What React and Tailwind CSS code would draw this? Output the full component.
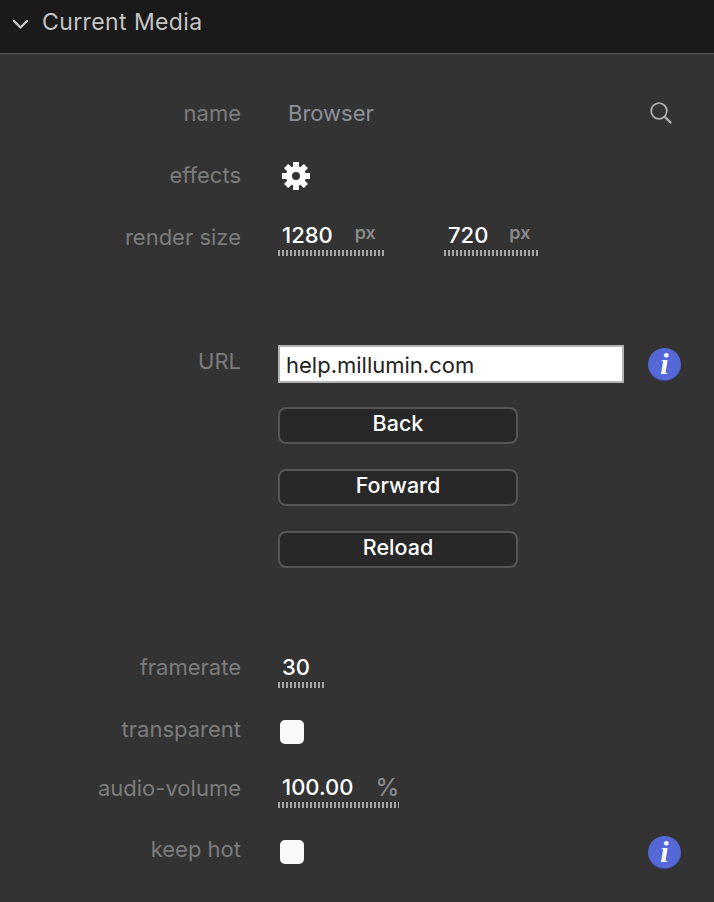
import React from 'react';

const Label = ({ children, className = '' }) => (
  <div className={`w-[241px] shrink-0 text-right text-[22px] leading-[28px] text-[#7c7c7c] ${className}`}>{children}</div>
);

const Ticks = ({ width }) => (
  <div
    className="h-[6px] mt-[1px] bg-[repeating-linear-gradient(90deg,#a6a6a6_0,#a6a6a6_2px,transparent_2px,transparent_4px)]"
    style={{ width }}
  />
);

const NumberField = ({ value, unit, width, unitGap, unitClass = '' }) => (
  <div className="flex flex-col justify-end h-full" style={{ width }}>
    <div className="flex items-start h-[27px] pl-[4px] text-[22px] leading-[27px] font-medium text-white">
      <span>{value}</span>
      {unit && <span className={`text-[#8a8a8a] ${unitClass}`} style={{ marginLeft: unitGap }}>{unit}</span>}
    </div>
    <Ticks width={width} />
  </div>
);

const InfoIcon = () => (
  <div className="w-[33px] h-[33px] rounded-full bg-[#5468d6] border-b border-[#3f4d9c] flex items-center justify-center text-white italic font-bold text-[30px] leading-none font-['Liberation_Serif',serif]">
    i
  </div>
);

const GearIcon = () => (
  <svg width="28" height="28" viewBox="0 0 28 28" fill="#ffffff">
    {[0, 45, 90, 135, 180, 225, 270, 315].map((a) => (
      <rect key={a} x="11" y="0" width="6" height="7" rx="0.5" transform={`rotate(${a} 14 14)`} />
    ))}
    <path fillRule="evenodd" d="M14 4a10 10 0 1 0 0 20a10 10 0 1 0 0-20zM14 10a4 4 0 1 1 0 8a4 4 0 1 1 0-8z" />
  </svg>
);

const Checkbox = () => <div className="w-[24px] h-[24px] rounded-[5px] bg-[#fafafa]" />;

const ActionButton = ({ label, className = '' }) => (
  <button className={`block ml-[278px] w-[240px] h-[37px] rounded-[8px] border-2 border-[#555555] bg-[#282828] text-white text-[21.5px] font-medium leading-[28px] pb-[5px] ${className}`}>
    {label}
  </button>
);

export default function App() {
  return (
    <div className="w-[714px] h-[902px] overflow-hidden bg-[#333333] font-['Inter',sans-serif]">
      {/* header */}
      <div className="flex items-center h-[54px] pl-[12px] pb-[10px] bg-[#1a1a1a] border-b border-[#555555]">
        <svg width="17" height="11" viewBox="0 0 17 11" className="mt-[5px]" fill="none" stroke="#c8c8c8" strokeWidth="2.4" strokeLinecap="round" strokeLinejoin="round">
          <path d="M2 2l6.5 6.5L15 2" />
        </svg>
        <span className="ml-[13px] text-[23px] leading-[28px] tracking-[0.4px] text-[#c4c4c4]">Current Media</span>
      </div>

      {/* media params */}
      <div className="flex items-center h-[38px] mt-[40px]">
        <Label>name</Label>
        <span className="ml-[47px] text-[22px] leading-[28px] text-[#8b9099]">Browser</span>
        <svg width="22" height="22" viewBox="0 0 22 22" className="ml-auto mr-[42px]" fill="none" stroke="#b0b0b0" strokeWidth="1.8" strokeLinecap="round">
          <circle cx="9" cy="9" r="7.8" />
          <path d="M14.8 14.8L20.5 20.5" strokeWidth="2.4" />
        </svg>
      </div>

      <div className="flex items-center h-[38px] mt-[25px]">
        <Label className="pb-[3px]">effects</Label>
        <div className="ml-[41px]"><GearIcon /></div>
      </div>

      <div className="flex items-center h-[38px] mt-[23px]">
        <Label>render size</Label>
        <div className="ml-[37px] h-full"><NumberField value="1280" unit="px" width="106px" unitGap="22px" unitClass="text-[18px] leading-[22px] font-semibold" /></div>
        <div className="ml-[60px] h-full"><NumberField value="720" unit="px" width="94px" unitGap="21px" unitClass="text-[18px] leading-[22px] font-semibold" /></div>
      </div>

      {/* browser */}
      <div className="flex items-center h-[38px] mt-[89px]">
        <Label className="pb-[6px]">URL</Label>
        <div className="ml-[37px] w-[346px] h-[38px] bg-white border-2 border-[#b4b4b4] pl-[6px] text-[22px] leading-[36px] text-[#222222]">help.millumin.com</div>
        <div className="ml-[24px]"><InfoIcon /></div>
      </div>
      <ActionButton label="Back" className="mt-[24px]" />
      <ActionButton label="Forward" className="mt-[25px]" />
      <ActionButton label="Reload" className="mt-[25px]" />

      {/* playback */}
      <div className="flex items-center h-[40px] mt-[80px]">
        <Label className="pb-[2px]">framerate</Label>
        <div className="ml-[37px] h-full"><NumberField value="30" width="46px" /></div>
      </div>

      <div className="flex items-center h-[32px] mt-[28px]">
        <Label className="pb-[6px]">transparent</Label>
        <div className="ml-[39px]"><Checkbox /></div>
      </div>

      <div className="flex items-center h-[38px] mt-[22px]">
        <Label className="pb-[2px]">audio-volume</Label>
        <div className="ml-[37px] h-full"><NumberField value="100.00" unit="%" width="121px" unitGap="22px" unitClass="font-medium text-[24px]" /></div>
      </div>

      <div className="flex items-center h-[32px] mt-[28px]">
        <Label className="pb-[6px]">keep hot</Label>
        <div className="ml-[39px]"><Checkbox /></div>
        <div className="ml-auto mr-[33px]"><InfoIcon /></div>
      </div>
    </div>
  );
}
